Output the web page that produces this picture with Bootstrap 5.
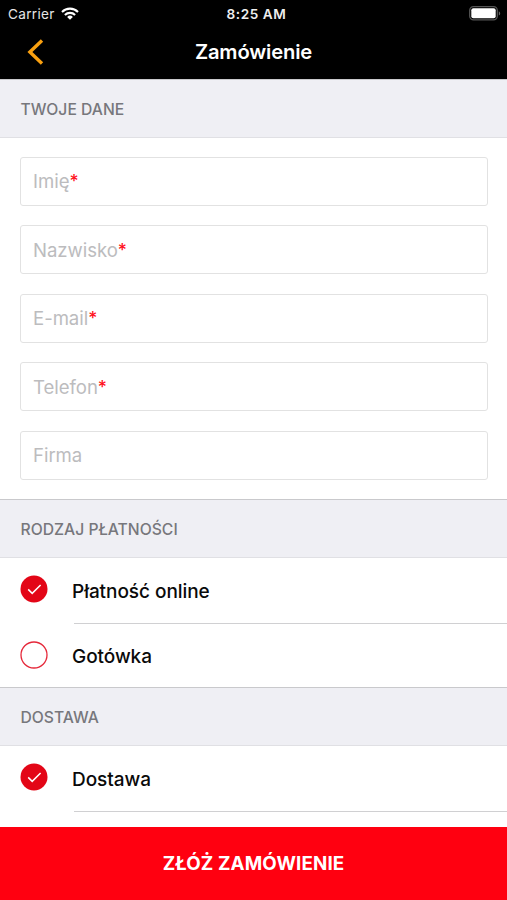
<!DOCTYPE html>
<html lang="pl">
<head>
<meta charset="utf-8">
<meta name="viewport" content="width=device-width, initial-scale=1">
<title>Zamówienie</title>
<link href="https://cdn.jsdelivr.net/npm/bootstrap@5.3.0/dist/css/bootstrap.min.css" rel="stylesheet">
<style>
body{font-family:Inter,"Liberation Sans",sans-serif;height:900px;line-height:1.2}
.screen{height:900px}
.topbar{height:79px;background:#000}
.status{height:27px;font-size:13.6px;padding:0 6px 0 8px}
.status>*{flex:1 1 0}
.carrier{letter-spacing:.3px;color:#e6e6e6}
.carrier span{padding-top:1px}
.carrier svg{margin-left:6.5px}
.clock{font-weight:600;letter-spacing:.55px;color:#eee;padding:1px 0 0 4px}
.titlebar{height:50px;padding:0 27px}
.title{font-size:20.2px;font-weight:600;letter-spacing:-.15px}
.side{width:17px}
.sect{height:59px;background:#efeff4;border-top:1px solid #c9c9cc;border-bottom:1px solid #e0e0e4;padding:3px 20.5px 0;color:#77777c;font-size:15.7px;font-weight:500;letter-spacing:0}
.fields{height:361px;padding:19px 19px 0 20px;gap:19.4px}
.field{height:49px;border:1.5px solid #e2e2e2;border-radius:3px;padding:0 12px;color:#bcbcbe;font-size:18.6px}
.field span{letter-spacing:-.05px}
.field b{color:#ff1020;font-weight:500;font-size:17.5px;line-height:1;vertical-align:1px}
.option{height:65px;padding-left:20px;color:#0a0a0a;font-size:19px;font-weight:500}
.option svg{width:28px;height:28px;margin-right:24px;margin-top:-3px}
.option span{padding-top:3px;letter-spacing:-.05px}
.option.last{height:63px}
.option.last svg{margin-top:-1px}
.rule{height:1px;margin-left:74px;background:#d0d0d2}
.submit{height:73px;background:#ff0010;font-size:18.8px;font-weight:700;letter-spacing:.12px;color:#fff;padding-top:8px}
</style>
<script src="https://cdn.jsdelivr.net/npm/bootstrap@5.3.0/dist/js/bootstrap.bundle.min.js"></script>
</head>
<body class="m-0 bg-white">
<div class="screen d-flex flex-column overflow-hidden">
  <header class="topbar text-white flex-shrink-0">
    <div class="status d-flex align-items-center">
      <div class="carrier d-flex align-items-center"><span>Carrier</span>
        <svg width="18" height="14" viewBox="0 0 18 14" fill="none" stroke="#fff" stroke-width="2.1"><path d="M1 4.9a11.5 11.5 0 0 1 16 0M3.9 8a7.3 7.3 0 0 1 10.2 0"/><path d="M9 12.8L6.1 10a4.2 4.2 0 0 1 5.8 0z" fill="#fff" stroke="none"/></svg>
      </div>
      <div class="clock text-center"><span>8:25 AM</span></div>
      <div class="d-flex justify-content-end">
        <svg width="32" height="15" viewBox="0 0 32 15"><rect x=".7" y=".7" width="27.6" height="13.2" rx="3.8" fill="none" stroke="#555" stroke-width="1.3"/><rect x="2.3" y="2.3" width="24.4" height="10" rx="2" fill="#fff"/><path d="M29.8 5.2c1.9.8 1.9 3.6 0 4.4z" fill="#666"/></svg>
      </div>
    </div>
    <div class="titlebar d-flex align-items-center justify-content-between">
      <svg class="side" height="26" viewBox="0 0 17 26" fill="none" stroke="#f9a010" stroke-width="3.4"><path d="M15 1.6L2.9 13 15 24.4"/></svg>
      <div class="title"><span>Zamówienie</span></div>
      <div class="side"></div>
    </div>
  </header>
  <main class="flex-grow-1 overflow-hidden">
    <div class="sect d-flex align-items-center"><span>TWOJE DANE</span></div>
    <div class="fields d-flex flex-column">
      <div class="field d-flex align-items-center"><span>Imię<b>*</b></span></div>
      <div class="field d-flex align-items-center"><span>Nazwisko<b>*</b></span></div>
      <div class="field d-flex align-items-center"><span>E-mail<b>*</b></span></div>
      <div class="field d-flex align-items-center"><span>Telefon<b>*</b></span></div>
      <div class="field d-flex align-items-center"><span>Firma</span></div>
    </div>
    <div class="sect d-flex align-items-center"><span>RODZAJ PŁATNOŚCI</span></div>
    <div class="option d-flex align-items-center">
      <svg viewBox="0 0 28 28"><circle cx="14" cy="14" r="13.5" fill="#e30617"/><path d="M8.2 14.4l4 4 8.4-8.4" fill="none" stroke="#fff" stroke-width="1.5"/></svg><span>Płatność online</span>
    </div>
    <div class="rule"></div>
    <div class="option last d-flex align-items-center">
      <svg viewBox="0 0 28 28"><circle cx="14" cy="14" r="13" fill="#fff" stroke="#e5283a" stroke-width="1.3"/></svg><span>Gotówka</span>
    </div>
    <div class="sect d-flex align-items-center"><span>DOSTAWA</span></div>
    <div class="option d-flex align-items-center">
      <svg viewBox="0 0 28 28"><circle cx="14" cy="14" r="13.5" fill="#e30617"/><path d="M8.2 14.4l4 4 8.4-8.4" fill="none" stroke="#fff" stroke-width="1.5"/></svg><span>Dostawa</span>
    </div>
    <div class="rule"></div>
  </main>
  <button class="submit btn rounded-0 border-0 w-100 flex-shrink-0"><span>ZŁÓŻ ZAMÓWIENIE</span></button>
</div>
</body>
</html>
